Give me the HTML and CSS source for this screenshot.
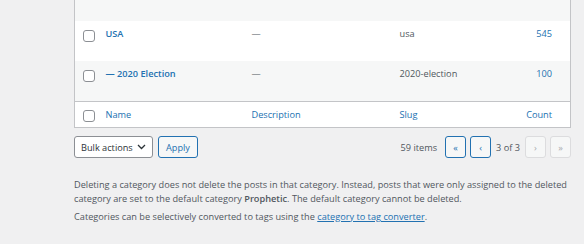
FILE: index.html
```html
<!DOCTYPE html>
<html lang="en">
<head>
    <meta charset="UTF-8">
    <meta name="viewport" content="width=device-width, initial-scale=1.0">
    <title>Categories</title>
    <link rel="stylesheet" href="styles.css">
</head>
<body>
    <div class="wrap">
        <table class="terms">
            <colgroup>
                <col class="col-check">
                <col class="col-name">
                <col class="col-desc">
                <col class="col-slug">
                <col class="col-count">
            </colgroup>
            <tbody>
                <tr class="alt clipped">
                    <td></td><td></td><td></td><td></td><td></td>
                </tr>
                <tr>
                    <td class="check"><span class="box"></span></td>
                    <td><a class="row-title" href="#">USA</a></td>
                    <td class="muted">&mdash;</td>
                    <td class="muted">usa</td>
                    <td class="num"><a href="#">545</a></td>
                </tr>
                <tr class="alt tall">
                    <td class="check"><span class="box"></span></td>
                    <td><a class="row-title" href="#">&mdash; 2020 Election</a></td>
                    <td class="muted">&mdash;</td>
                    <td class="muted">2020-election</td>
                    <td class="num"><a href="#">100</a></td>
                </tr>
            </tbody>
            <tfoot>
                <tr>
                    <th class="check"><span class="box"></span></th>
                    <th>Name</th>
                    <th>Description</th>
                    <th>Slug</th>
                    <th class="num">Count</th>
                </tr>
            </tfoot>
        </table>

        <div class="tablenav">
            <div class="bulk">
                <div class="select">Bulk actions
                    <svg width="9" height="6" viewBox="0 0 9 6"><path d="M1 1l3.5 3.5L8 1" fill="none" stroke="#2c3338" stroke-width="1.3"/></svg>
                </div>
                <button class="button">Apply</button>
            </div>
            <div class="pages">
                <span class="count">59 items</span>
                <span class="page-btn">&laquo;</span>
                <span class="page-btn">&lsaquo;</span>
                <span class="current">3 of 3</span>
                <span class="page-btn off">&rsaquo;</span>
                <span class="page-btn off">&raquo;</span>
            </div>
        </div>

        <div class="notes">
            <p>Deleting a category does not delete the posts in that category. Instead, posts that were only assigned to the deleted category are set to the default category <strong>Prophetic</strong>. The default category cannot be deleted.</p>
            <p>Categories can be selectively converted to tags using the <a href="#">category to tag converter</a>.</p>
        </div>
    </div>
</body>
</html>
```

FILE: styles.css
```css
body {
    margin: 0;
    background: #f0f0f1;
    font-family: "Open Sans", "Noto Sans", sans-serif;
    font-size: 9.2px;
    color: #3c434a;
}

.wrap {
    padding: 0 13px 0 74px;
    margin-top: -21px;
}

/* list table */
.terms {
    width: 100%;
    border-collapse: collapse;
    table-layout: fixed;
    background: #fff;
    border: 1px solid #c3c4c7;
}

.col-check { width: 31px; }
.col-name { width: 146px; }
.col-desc { width: 148px; }
.col-slug { width: 100px; }

.terms td,
.terms th {
    box-sizing: border-box;
    padding: 6px 0 0;
    height: 40px;
    line-height: 14px;
    text-align: left;
    font-weight: normal;
    vertical-align: top;
}

.terms tr.alt { background: #f6f7f7; }
.terms tr.clipped td { height: 41px; }
.terms tr.tall td { height: 41px; }

.terms tfoot th {
    height: 26px;
    padding-top: 6px;
    border-top: 1px solid #c3c4c7;
    color: #2271b1;
}

.terms .check { padding-left: 8px; }

.box {
    display: block;
    margin-top: 3px;
    width: 10px;
    height: 10px;
    border: 1px solid #8c8f94;
    border-radius: 3px;
    background: #fff;
}

.terms tfoot .box { margin-top: 2px; }

.terms a {
    color: #2271b1;
    text-decoration: none;
}

.row-title { font-weight: 600; }

.muted { color: #50575e; }

.terms .num {
    text-align: right;
    padding-right: 18px;
}

/* nav under table */
.tablenav {
    display: flex;
    justify-content: space-between;
    align-items: center;
    margin-top: 8px;
}

.bulk {
    display: flex;
    gap: 5px;
}

.select,
.button,
.page-btn {
    box-sizing: border-box;
    height: 22px;
    border-radius: 3px;
    display: flex;
    align-items: center;
    font-family: inherit;
    font-size: 9.2px;
}

.select {
    width: 79px;
    padding: 0 6px 0 6px;
    justify-content: space-between;
    background: #fff;
    border: 1px solid #8c8f94;
    color: #2c3338;
}

.button {
    width: 40px;
    justify-content: center;
    background: #f6f7f7;
    border: 1px solid #2271b1;
    color: #2271b1;
}

.pages {
    display: flex;
    align-items: center;
    gap: 4px;
    color: #50575e;
}

.pages .count { margin-right: 4px; }
.pages .current { margin: 0 1px; }

.page-btn {
    width: 21px;
    justify-content: center;
    background: #f6f7f7;
    border: 1px solid #2271b1;
    color: #2271b1;
}

.page-btn.off {
    border-color: #dcdcde;
    color: #a7aaad;
}

/* notes */
.notes {
    margin-top: 20px;
    color: #50575e;
}

.notes p {
    margin: 0 0 4px;
    line-height: 14px;
}

.notes strong { font-weight: 600; }

.notes a { color: #2271b1; }
```
